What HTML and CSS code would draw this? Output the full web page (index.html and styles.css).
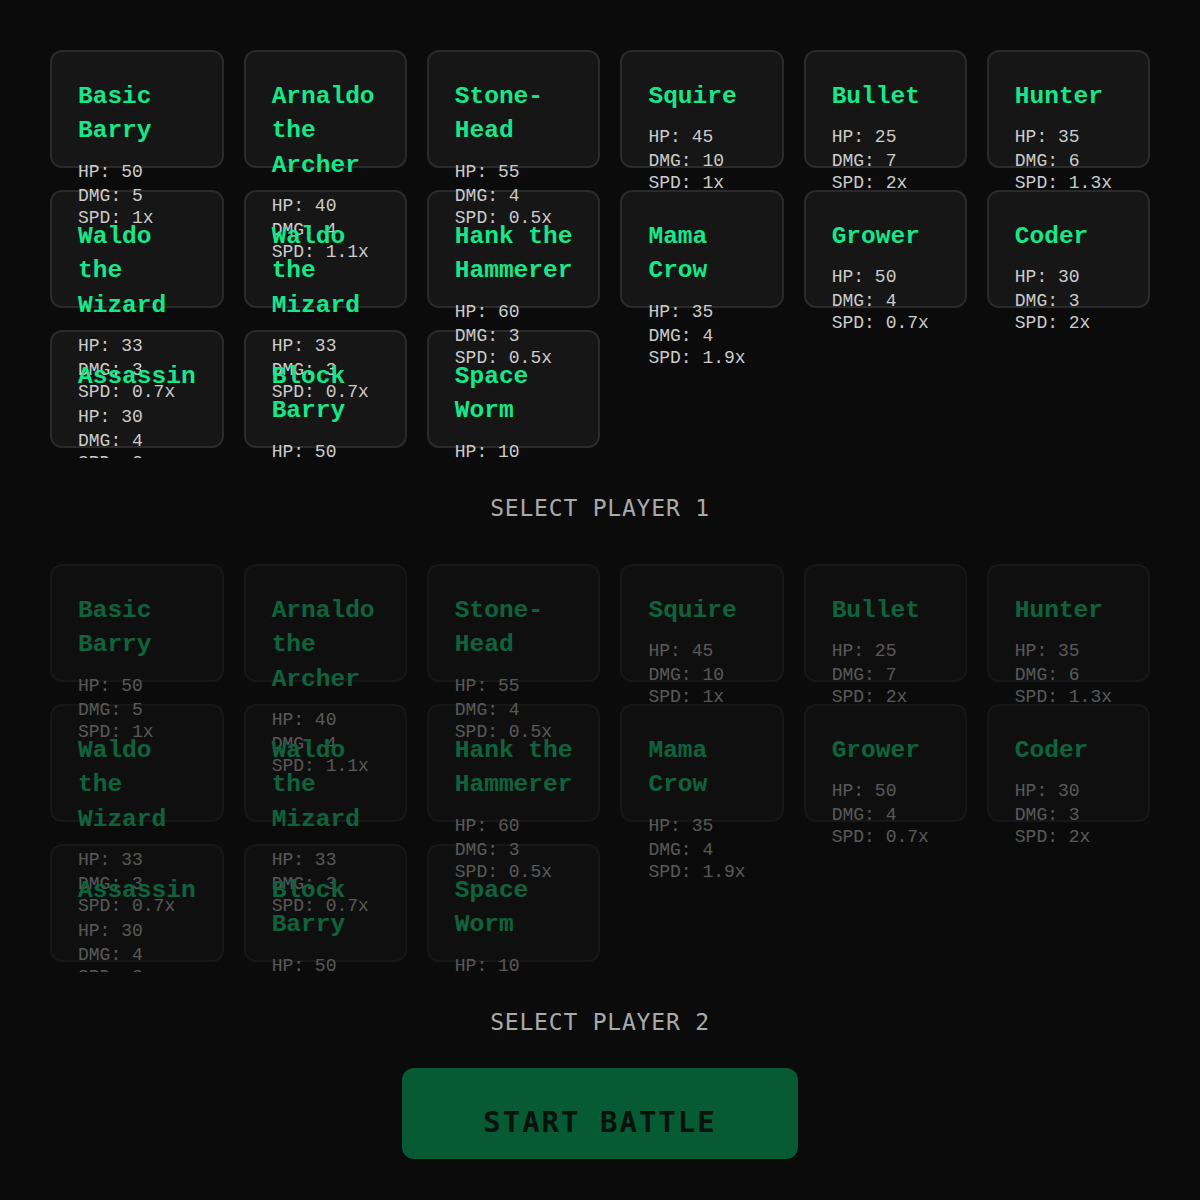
FILE: index.html
```html
<!DOCTYPE html>
<html lang="en">
<head>
  <meta charset="UTF-8" />
  <meta name="viewport" content="width=device-width, initial-scale=1.0" />
  <title>Battle Select</title>
  <link rel="stylesheet" href="styles.css">
</head>
<body>
  <div class="roster" id="roster1"></div>
  <div class="select-label" id="label1">SELECT PLAYER 1</div>

  <div class="roster locked" id="roster2"></div>
  <div class="select-label" id="label2">SELECT PLAYER 2</div>

  <button class="start-btn" id="startBtn">START BATTLE</button>

  <script>
    const fighters = [
      { name: 'Basic Barry', hp: 50, dmg: 5, spd: 1 },
      { name: 'Arnaldo the Archer', hp: 40, dmg: 4, spd: 1.1 },
      { name: 'Stone-Head', hp: 55, dmg: 4, spd: 0.5 },
      { name: 'Squire', hp: 45, dmg: 10, spd: 1 },
      { name: 'Bullet', hp: 25, dmg: 7, spd: 2 },
      { name: 'Hunter', hp: 35, dmg: 6, spd: 1.3 },
      { name: 'Waldo the Wizard', hp: 33, dmg: 3, spd: 0.7 },
      { name: 'Waldo the Mizard', hp: 33, dmg: 3, spd: 0.7 },
      { name: 'Hank the Hammerer', hp: 60, dmg: 3, spd: 0.5 },
      { name: 'Mama Crow', hp: 35, dmg: 4, spd: 1.9 },
      { name: 'Grower', hp: 50, dmg: 4, spd: 0.7 },
      { name: 'Coder', hp: 30, dmg: 3, spd: 2 },
      { name: 'Assassin', hp: 30, dmg: 4, spd: 2 },
      { name: 'Block Barry', hp: 50, dmg: 5, spd: 0.8 },
      { name: 'Space Worm', hp: 10, dmg: 2, spd: 1.5 }
    ];

    let p1 = null;
    let p2 = null;

    function fillRoster(el, onPick) {
      fighters.forEach((f, i) => {
        const card = document.createElement('div');
        card.className = 'card';
        card.innerHTML =
          `<div class="name">${f.name}</div>` +
          `<div class="stats">` +
            `<div>HP: ${f.hp}</div>` +
            `<div>DMG: ${f.dmg}</div>` +
            `<div>SPD: ${f.spd}x</div>` +
          `</div>`;
        card.addEventListener('click', () => onPick(i));
        el.appendChild(card);
      });
    }

    fillRoster(document.getElementById('roster1'), i => {
      p1 = fighters[i];
      document.getElementById('label1').textContent = p1.name.toUpperCase();
      document.getElementById('roster2').classList.remove('locked');
    });

    fillRoster(document.getElementById('roster2'), i => {
      if (!p1) return;
      p2 = fighters[i];
      document.getElementById('label2').textContent = p2.name.toUpperCase();
      document.getElementById('startBtn').classList.add('ready');
    });
  </script>
</body>
</html>
```

FILE: styles.css
```css
body {
  margin: 0;
  padding: 40px 40px 0;
  background: #0b0b0b;
  font-family: 'Liberation Mono', 'DejaVu Sans Mono', monospace;
}

.roster {
  display: grid;
  grid-template-columns: repeat(6, 1fr);
  grid-auto-rows: 118px;
  gap: 22px 20px;
  padding: 10px;
  height: 398px;
  overflow: hidden;
}
.roster.locked {
  opacity: 0.4;
}

.card {
  box-sizing: border-box;
  background: #161616;
  border: 2px solid #2a2a2a;
  border-radius: 12px;
  padding: 28px 26px 0;
  cursor: pointer;
}
/* text sits above every card background, so long names spill over the next row */
.name,
.stats {
  position: relative;
}
.name {
  font-size: 24.5px;
  line-height: 1.4;
  font-weight: bold;
  color: #14e88a;
  margin-bottom: 12px;
}
.stats {
  font-size: 18px;
  line-height: 22px;
  color: #cccccc;
}
.stats div:first-child {
  margin-bottom: 2px;
}

.select-label {
  margin: 38px 0 34px;
  font-family: 'DejaVu Sans Mono', monospace;
  font-size: 23px;
  line-height: 24px;
  letter-spacing: 0.8px;
  color: #aaaaaa;
  text-align: center;
}

.start-btn {
  display: block;
  box-sizing: border-box;
  margin: 0 auto;
  width: 396px;
  height: 91px;
  padding: 18px 0 0;
  border: none;
  border-radius: 12px;
  background: #065a34;
  color: #08120c;
  font-family: 'DejaVu Sans Mono', monospace;
  font-size: 29px;
  font-weight: bold;
  line-height: 1;
  letter-spacing: 2px;
}
.start-btn.ready {
  background: #14e88a;
  color: #0b0b0b;
  cursor: pointer;
}
```
